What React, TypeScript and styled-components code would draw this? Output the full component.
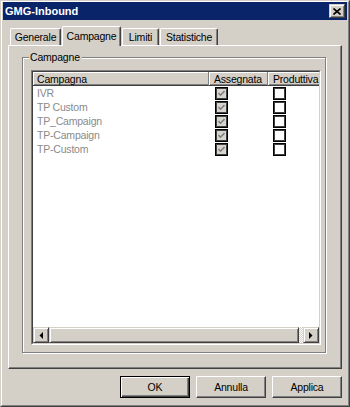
import React from "react";
import styled, { createGlobalStyle, css } from "styled-components";

const FACE = "#D4D0C8";
const LIGHT = "#FFFFFF";
const SHADOW = "#808080";
const DARK = "#404040";
const TITLE = "#0A246A";

const Global = createGlobalStyle`
  html, body { margin: 0; padding: 0; background: #ffffff; }
  body {
    font-family: "Liberation Sans", Arial, sans-serif;
    font-size: 10.5px;
    letter-spacing: -0.2px;
    color: #000;
  }
  * { box-sizing: border-box; }
`;

const raised = css`
  border: 1px solid;
  border-color: ${FACE} ${DARK} ${DARK} ${FACE};
  box-shadow: inset 1px 1px 0 ${LIGHT}, inset -1px -1px 0 ${SHADOW};
  background: ${FACE};
`;

const Window = styled.div`
  width: 350px;
  height: 407px;
  background: ${FACE};
  border: 1px solid;
  border-color: ${FACE} ${DARK} ${DARK} ${FACE};
  display: flex;
  overflow: hidden;
`;

const Frame = styled.div`
  flex: 1;
  min-width: 0;
  display: flex;
  flex-direction: column;
  border: 1px solid;
  border-color: ${LIGHT} ${SHADOW} ${SHADOW} ${LIGHT};
  padding: 0 1px 1px 1px;
`;

const TitleBar = styled.div`
  height: 18px;
  background: ${TITLE};
  display: flex;
  align-items: center;
  justify-content: space-between;
  padding: 0 2px 0 2px;
`;

const TitleText = styled.span`
  color: #fff;
  font-weight: bold;
  font-size: 11px;
  letter-spacing: 0;
`;

const CloseButton = styled.div`
  ${raised};
  width: 16px;
  height: 14px;
  display: flex;
  align-items: center;
  justify-content: center;
`;

const Body = styled.div`
  flex: 1;
  min-width: 0;
  display: flex;
  flex-direction: column;
  padding: 6px 5px 0 5px;
`;

const TabStrip = styled.div`
  height: 19px;
  display: flex;
  align-items: flex-end;
  gap: 1px;
  padding-left: 2px;
`;

const Tab = styled.div<{ $w: number; $active?: boolean }>`
  width: ${(p) => p.$w}px;
  height: ${(p) => (p.$active ? 20 : 17)}px;
  margin-bottom: ${(p) => (p.$active ? -1 : 0)}px;
  background: ${FACE};
  border-top: 1px solid ${LIGHT};
  border-left: 1px solid ${LIGHT};
  border-right: 1px solid ${DARK};
  border-top-left-radius: 2px;
  border-top-right-radius: 2px;
  box-shadow: inset -1px 0 0 ${SHADOW};
  display: flex;
  align-items: center;
  justify-content: center;
  padding-bottom: ${(p) => (p.$active ? 2 : 0)}px;
  position: relative;
  z-index: ${(p) => (p.$active ? 2 : 0)};
`;

const Panel = styled.div`
  height: 324px;
  min-width: 0;
  display: flex;
  flex-direction: column;
  border: 1px solid;
  border-color: ${LIGHT} ${DARK} ${DARK} ${LIGHT};
  box-shadow: inset -1px -1px 0 ${SHADOW};
  padding: 11px 14px 14px 13px;
  position: relative;
  z-index: 1;
`;

const GroupBox = styled.div`
  flex: 1;
  min-width: 0;
  display: flex;
  flex-direction: column;
  border: 1px solid ${SHADOW};
  box-shadow: inset 1px 1px 0 ${LIGHT}, 1px 1px 0 ${LIGHT};
  margin-right: 1px;
  margin-bottom: 1px;
  padding: 0 4px 7px 8px;
`;

const Legend = styled.span`
  align-self: flex-start;
  line-height: 13px;
  margin: -7px 0 0 -2px;
  padding: 0 2px 0 1px;
  background: ${FACE};
`;

const ListOuter = styled.div`
  flex: 1;
  min-width: 0;
  min-height: 0;
  margin-top: 6px;
  display: flex;
  border: 1px solid;
  border-color: ${SHADOW} ${LIGHT} ${LIGHT} ${SHADOW};
`;

const ListInner = styled.div`
  flex: 1;
  min-width: 0;
  display: flex;
  flex-direction: column;
  border: 1px solid;
  border-color: ${DARK} ${FACE} ${FACE} ${DARK};
  overflow: hidden;
  background: #fff;
`;

const columns = css`
  display: grid;
  grid-template-columns: 176px 59px 59px;
`;

const Header = styled.div`
  ${columns};
  height: 14px;
  flex-shrink: 0;
  background: ${FACE};
`;

const HeaderCell = styled.div`
  display: flex;
  align-items: center;
  padding-left: 5px;
  white-space: nowrap;
  overflow: hidden;
  border-right: 1px solid ${SHADOW};
  border-bottom: 1px solid ${DARK};
  box-shadow: inset 1px 1px 0 ${LIGHT}, inset 0 -1px 0 ${SHADOW};
  &:first-child { padding-left: 4px; }
`;

const Rows = styled.div`
  flex: 1;
  background: #fff;
`;

const Row = styled.div`
  ${columns};
  height: 14px;
  align-items: center;
`;

const NameCell = styled.div`
  padding-left: 4px;
  color: #8a8a8a;
  white-space: nowrap;
`;

const CheckCell = styled.div<{ $pad: number }>`
  display: flex;
  align-items: center;
  padding-left: ${(p) => p.$pad}px;
`;

const CheckBox = styled.div<{ $disabled?: boolean }>`
  width: 13px;
  height: 13px;
  border: 1px solid #000;
  box-shadow: inset 0 0 0 1px ${DARK};
  background: ${(p) => (p.$disabled ? "#D8D5CE" : "#fff")};
  display: flex;
  align-items: center;
  justify-content: center;
`;

const ScrollBar = styled.div`
  height: 16px;
  flex-shrink: 0;
  display: flex;
  background: repeating-conic-gradient(${FACE} 0 25%, #ffffff 0 50%) 0 0 / 2px 2px;
`;

const ScrollButton = styled.div`
  ${raised};
  width: 16px;
  height: 16px;
  flex-shrink: 0;
  display: flex;
  align-items: center;
  justify-content: center;
`;

const Thumb = styled.div`
  ${raised};
  flex: 1;
  margin-right: 4px;
`;

const ButtonRow = styled.div`
  display: flex;
  justify-content: flex-end;
  gap: 6px;
  margin-top: 7px;
`;

const Button = styled.div<{ $default?: boolean }>`
  width: 70px;
  height: 22px;
  display: flex;
  align-items: center;
  justify-content: center;
  background: ${FACE};
  border: 1px solid;
  ${(p) =>
    p.$default
      ? css`
          border-color: #000;
          box-shadow: inset 1px 1px 0 ${LIGHT}, inset -1px -1px 0 ${DARK},
            inset -2px -2px 0 ${SHADOW};
        `
      : css`
          border-color: ${LIGHT} ${DARK} ${DARK} ${LIGHT};
          box-shadow: inset -1px -1px 0 ${SHADOW};
        `}
`;

const CloseIcon = () => (
  <svg width="8" height="7" viewBox="0 0 8 7">
    <path d="M0.5 0.5 L7.5 6.5 M7.5 0.5 L0.5 6.5" stroke="#000" strokeWidth="1.6" />
  </svg>
);

const CheckMark = () => (
  <svg width="7" height="7" viewBox="0 0 7 7">
    <polyline points="0.5,3 2.5,5.2 6.5,1" fill="none" stroke="#808080" strokeWidth="1.6" />
  </svg>
);

const Arrow = ({ dir }: { dir: "left" | "right" }) => (
  <svg width="4" height="7" viewBox="0 0 4 7">
    {dir === "left" ? (
      <polygon points="4,0 4,7 0.5,3.5" fill="#000" />
    ) : (
      <polygon points="0,0 0,7 3.5,3.5" fill="#000" />
    )}
  </svg>
);

const tabs = [
  { label: "Generale", w: 51 },
  { label: "Campagne", w: 59, active: true },
  { label: "Limiti", w: 37 },
  { label: "Statistiche", w: 58 },
];

const campaigns = ["IVR", "TP Custom", "TP_Campaign", "TP-Campaign", "TP-Custom"];

export default function App() {
  return (
    <>
      <Global />
      <Window>
        <Frame>
          <TitleBar>
            <TitleText>GMG-Inbound</TitleText>
            <CloseButton>
              <CloseIcon />
            </CloseButton>
          </TitleBar>
          <Body>
            <TabStrip>
              {tabs.map((t) => (
                <Tab key={t.label} $w={t.w} $active={t.active}>
                  {t.label}
                </Tab>
              ))}
            </TabStrip>
            <Panel>
              <GroupBox>
                <Legend>Campagne</Legend>
                <ListOuter>
                  <ListInner>
                    <Header>
                      <HeaderCell>Campagna</HeaderCell>
                      <HeaderCell>Assegnata</HeaderCell>
                      <HeaderCell>Produttiva</HeaderCell>
                    </Header>
                    <Rows>
                      {campaigns.map((c) => (
                        <Row key={c}>
                          <NameCell>{c}</NameCell>
                          <CheckCell $pad={6}>
                            <CheckBox $disabled>
                              <CheckMark />
                            </CheckBox>
                          </CheckCell>
                          <CheckCell $pad={5}>
                            <CheckBox />
                          </CheckCell>
                        </Row>
                      ))}
                    </Rows>
                    <ScrollBar>
                      <ScrollButton>
                        <Arrow dir="left" />
                      </ScrollButton>
                      <Thumb />
                      <ScrollButton>
                        <Arrow dir="right" />
                      </ScrollButton>
                    </ScrollBar>
                  </ListInner>
                </ListOuter>
              </GroupBox>
            </Panel>
            <ButtonRow>
              <Button $default>OK</Button>
              <Button>Annulla</Button>
              <Button>Applica</Button>
            </ButtonRow>
          </Body>
        </Frame>
      </Window>
    </>
  );
}
